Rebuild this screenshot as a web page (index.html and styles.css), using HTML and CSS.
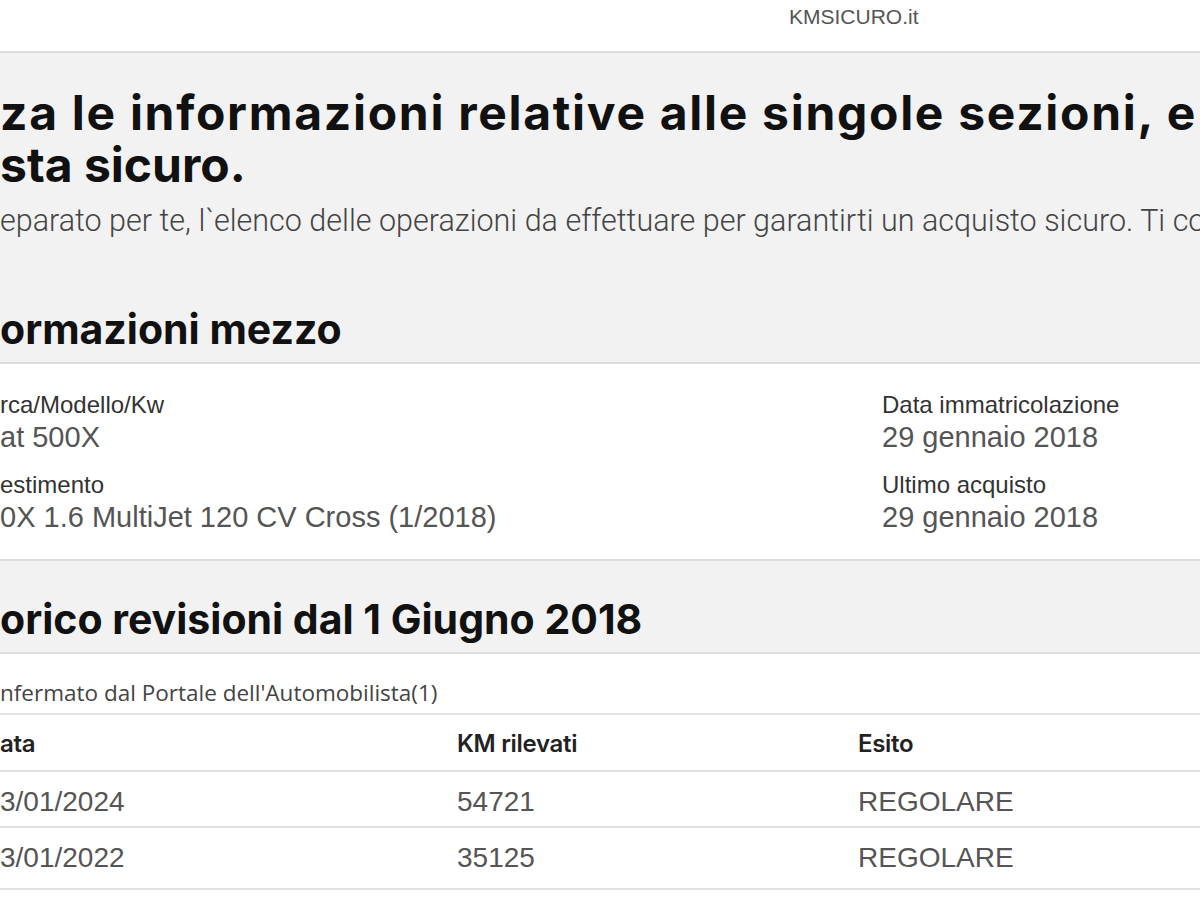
FILE: index.html
```html
<!DOCTYPE html>
<html lang="it">
<head>
<meta charset="utf-8">
<title>KMSICURO.it</title>
<link rel="stylesheet" href="styles.css">
</head>
<body>
<header class="topbar">
  <span class="brand">KMSICURO.it</span>
</header>
<main class="page">
  <section class="intro">
    <h1 class="intro-title"><span class="intro-line intro-line--wide">za le informazioni relative alle singole sezioni, e</span><span class="intro-line">sta sicuro.</span></h1>
    <p class="intro-text">eparato per te, l`elenco delle operazioni da effettuare per garantirti un acquisto sicuro. Ti co</p>
  </section>

  <h2 class="section-title section-title--first">ormazioni mezzo</h2>
  <section class="panel info-grid">
    <div class="info-col">
      <div class="field">
        <div class="field-label">rca/Modello/Kw</div>
        <div class="field-value">at 500X</div>
      </div>
      <div class="field">
        <div class="field-label">estimento</div>
        <div class="field-value">0X 1.6 MultiJet 120 CV Cross (1/2018)</div>
      </div>
    </div>
    <div class="info-col">
      <div class="field">
        <div class="field-label">Data immatricolazione</div>
        <div class="field-value">29 gennaio 2018</div>
      </div>
      <div class="field">
        <div class="field-label">Ultimo acquisto</div>
        <div class="field-value">29 gennaio 2018</div>
      </div>
    </div>
  </section>

  <h2 class="section-title">orico revisioni dal 1 Giugno 2018</h2>
  <section class="panel history">
    <div class="history-note">nfermato dal Portale dell'Automobilista(1)</div>
    <div class="table">
      <div class="row row--head">
        <div class="cell">ata</div>
        <div class="cell">KM rilevati</div>
        <div class="cell">Esito</div>
      </div>
      <div class="row row--first">
        <div class="cell">3/01/2024</div>
        <div class="cell">54721</div>
        <div class="cell">REGOLARE</div>
      </div>
      <div class="row row--last">
        <div class="cell">3/01/2022</div>
        <div class="cell">35125</div>
        <div class="cell">REGOLARE</div>
      </div>
    </div>
  </section>
</main>
</body>
</html>
```

FILE: styles.css
```css
* { box-sizing: border-box; }

html, body {
  margin: 0;
  padding: 0;
  background: #f2f2f2;
  overflow: hidden;
}

body {
  width: 1200px;
  height: 900px;
  font-family: "Liberation Sans", Arial, sans-serif;
  color: #222;
}

.topbar {
  height: 53px;
  background: #fff;
  border-bottom: 2px solid #dddddd;
  display: flex;
  align-items: flex-start;
  padding-left: 789px;
  padding-top: 4px;
}

.brand {
  font-family: "Liberation Sans", Arial, sans-serif;
  font-size: 21px;
  line-height: 26px;
  color: #555;
}

.page {
  display: flex;
  flex-direction: column;
}

.intro {
  padding-top: 34px;
}

.intro-title {
  margin: 0;
  font-family: Inter, "Noto Sans", sans-serif;
  font-weight: 700;
  font-size: 48px;
  line-height: 52px;
  color: #111;
}

.intro-line {
  display: block;
  white-space: nowrap;
}

.intro-line--wide {
  letter-spacing: 1.7px;
}

.intro-text {
  margin: 12px 0 0;
  font-family: Roboto, "Noto Sans", sans-serif;
  font-weight: 300;
  font-size: 30.5px;
  line-height: 36px;
  color: #444;
  white-space: nowrap;
}

.section-title {
  margin: 0;
  padding: 35px 0 10px;
  font-family: Inter, "Noto Sans", sans-serif;
  font-weight: 700;
  font-size: 41px;
  line-height: 46px;
  color: #111;
  white-space: nowrap;
}

.section-title--first {
  padding-top: 67px;
}

.panel {
  background: #fff;
  border-top: 2px solid #dddddd;
  border-bottom: 2px solid #dddddd;
}

.info-grid {
  display: grid;
  grid-template-columns: 882px 1fr;
  padding: 27px 0 24px;
}

.info-col {
  display: flex;
  flex-direction: column;
  gap: 16px;
}

.field-label {
  font-size: 24px;
  line-height: 28px;
  color: #333;
}

.field-value {
  font-size: 29px;
  line-height: 36px;
  color: #555;
  white-space: nowrap;
}

.history {
  padding-bottom: 14px;
}

.history-note {
  font-family: "Open Sans", Roboto, sans-serif;
  font-size: 22.5px;
  line-height: 26px;
  color: #444;
  padding: 26px 0 7px;
  border-bottom: 2px solid #e2e2e2;
}

.row {
  display: grid;
  grid-template-columns: 457px 401px 1fr;
  border-bottom: 2px solid #e2e2e2;
  height: 56px;
  align-items: center;
}

.row .cell {
  font-size: 28px;
  color: #555;
}

.row--head {
  height: 57px;
  padding-top: 2px;
}

.row--head .cell {
  font-family: Inter, "Noto Sans", sans-serif;
  font-weight: 600;
  font-size: 24px;
  letter-spacing: -0.3px;
  color: #222;
}

.row--first {
  padding-top: 5px;
}

.row--last {
  height: 62px;
}
```
